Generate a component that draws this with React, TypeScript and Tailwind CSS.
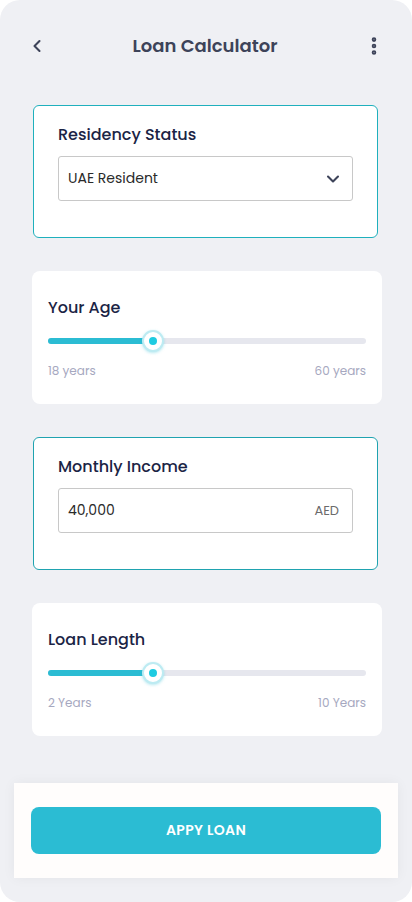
import { ChevronLeft, ChevronDown, EllipsisVertical } from "lucide-react";

const font = { fontFamily: '"Poppins", "Inter", "Noto Sans", sans-serif' };

const Slider = ({ min, max }: { min: string; max: string }) => {
  return (
    <div>
      <div className="relative mt-[18px] h-[6px] rounded-full bg-[#e6e7ee]">
        <div className="h-full w-[105px] rounded-full bg-[#2bbcd3]" />
        <div className="absolute left-[94px] top-[-8px] flex h-[22px] w-[22px] items-center justify-center rounded-full border-2 border-[#bdebf2] bg-white shadow-[0_1px_3px_rgba(43,188,211,0.35)]">
          <div className="h-[8px] w-[8px] rounded-full bg-[#1ecbe1]" />
        </div>
      </div>
      <div className="mt-[21px] flex justify-between text-[12px] leading-none text-[#a6a8c0]">
        <span>{min}</span>
        <span>{max}</span>
      </div>
    </div>
  );
};

const App = () => {
  return (
    <div className="h-[902px] w-[412px] bg-white" style={font}>
      <div className="flex h-full flex-col rounded-[20px] bg-[#eff0f4]">
        <div className="flex h-[90px] items-center justify-between px-[27px] pt-[1px]">
          <ChevronLeft size={20} strokeWidth={2.5} className="text-[#3d4359]" />
          <h1 className="text-[18px] font-semibold text-[#3d4359]">Loan Calculator</h1>
          <EllipsisVertical size={22} strokeWidth={3} className="text-[#3d4359]" />
        </div>

        <div className="mt-[15px] flex flex-col pl-[33px] pr-[34px]">
          <div className="rounded-[6px] border border-[#1fb0bd] bg-white px-[24px] pb-[36px] pt-[17px]">
            <p className="text-[16px] font-medium text-[#1b2445]">Residency Status</p>
            <div className="mt-[9px] flex h-[45px] items-center justify-between rounded-[3px] border border-[#c8c8c8] px-[9px]">
              <span className="text-[14px] text-[#2a2a2a]">UAE Resident</span>
              <ChevronDown size={20} strokeWidth={2.5} className="text-[#3d4359]" />
            </div>
          </div>
        </div>

        <div className="mt-[33px] flex flex-col pl-[32px] pr-[30px]">
          <div className="rounded-[8px] bg-white px-[16px] pb-[27px] pt-[25px]">
            <p className="text-[16px] font-medium text-[#1b2445]">Your Age</p>
            <Slider min="18 years" max="60 years" />
          </div>
        </div>

        <div className="mt-[33px] flex flex-col pl-[33px] pr-[34px]">
          <div className="rounded-[6px] border border-[#1fa3b0] bg-white px-[24px] pb-[36px] pt-[17px]">
            <p className="text-[16px] font-medium text-[#1b2445]">Monthly Income</p>
            <div className="mt-[9px] flex h-[45px] items-center justify-between rounded-[3px] border border-[#c8c8c8] px-[9px]">
              <span className="text-[14px] text-[#2a2a2a]">40,000</span>
              <span className="pr-[4px] text-[13px] text-[#6b6b6b]">AED</span>
            </div>
          </div>
        </div>

        <div className="mt-[33px] flex flex-col pl-[32px] pr-[30px]">
          <div className="rounded-[8px] bg-white px-[16px] pb-[27px] pt-[25px]">
            <p className="text-[16px] font-medium text-[#1b2445]">Loan Length</p>
            <Slider min="2 Years" max="10 Years" />
          </div>
        </div>

        <div className="mt-auto mb-[24px] px-[14px]">
          <div className="bg-[#fffdfc] px-[17px] py-[24px] shadow-[0_0_12px_rgba(0,0,0,0.05)]">
            <button className="flex h-[47px] w-full items-center justify-center rounded-[8px] bg-[#2bbcd3] text-[14px] font-semibold tracking-wide text-white">
              APPY LOAN
            </button>
          </div>
        </div>
      </div>
    </div>
  );
};

export default App;
